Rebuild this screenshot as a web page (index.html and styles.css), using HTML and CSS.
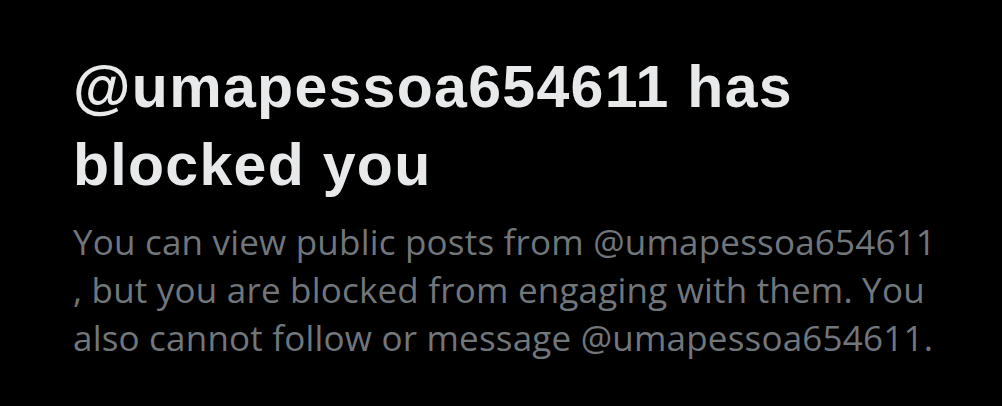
FILE: index.html
```html
<!DOCTYPE html>
<html>
<head>
<meta charset="utf-8">
<link rel="stylesheet" href="styles.css">
</head>
<body>
<main class="panel">
  <h1 class="title">@umapessoa654611 has blocked you</h1>
  <p class="desc">You can view public posts from <span class="handle">@umapessoa654611</span><wbr>, but you are blocked from engaging with them. You also cannot follow or message <span class="handle">@umapessoa654611</span>.</p>
</main>
</body>
</html>
```
FILE: styles.css
```css
html, body {
  margin: 0;
  padding: 0;
  background: #000;
  height: 100%;
}
.panel {
  padding: 48px 0 0 73px;
  width: 865px;
}
.title {
  margin: 0;
  font-family: "Liberation Sans", Arial, sans-serif;
  font-weight: 700;
  font-size: 59px;
  line-height: 78px;
  letter-spacing: 1.3px;
  color: #e7e9ea;
  width: 760px;
}
.desc {
  margin: 14px 0 0;
  font-family: "Open Sans", "Liberation Sans", sans-serif;
  font-weight: 400;
  font-size: 35px;
  line-height: 48px;
  letter-spacing: 0.2px;
  color: #71767b;
}
</style>
```
